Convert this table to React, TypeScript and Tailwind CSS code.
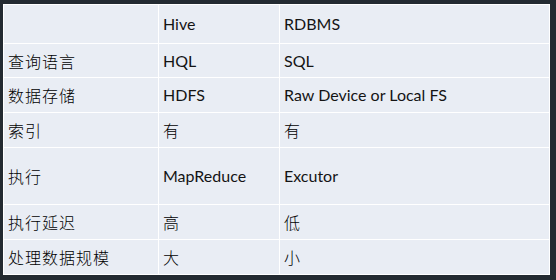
const rows: [string, string, string, number][] = [
  ['', 'Hive', 'RDBMS', 38],
  ['查询语言', 'HQL', 'SQL', 33],
  ['数据存储', 'HDFS', 'Raw Device or Local FS', 34],
  ['索引', '有', '有', 34],
  ['执行', 'MapReduce', 'Excutor', 56],
  ['执行延迟', '高', '低', 34],
  ['处理数据规模', '大', '小', 34],
];

const cjk = "font-['Noto_Sans_CJK_SC',sans-serif] tracking-[1px] font-light";
const latin = "font-['Lato','Noto_Sans_CJK_SC',sans-serif]";

function Cell({ text, h }: { text: string; h: number }) {
  const isLatin = /^[A-Za-z ]+$/.test(text);
  return (
    <div
      className={`flex items-center bg-[#e9edf4] pl-[4px] text-[16px] leading-none ${
        isLatin ? latin + ' text-[#141414]' : cjk + ' text-black'
      }`}
      style={{ height: h }}
    >
      {text}
    </div>
  );
}

export default function App() {
  return (
    <div className="h-[280px] w-[556px] bg-[#232a31] pl-[3px] pt-[4px]">
      <div className="grid w-[547px] grid-cols-[154px_120px_269px] gap-px bg-white p-px">
        {rows.map(([a, b, c, h], i) => (
          <div key={i} className="contents">
            <Cell text={a} h={h} />
            <Cell text={b} h={h} />
            <Cell text={c} h={h} />
          </div>
        ))}
      </div>
    </div>
  );
}
